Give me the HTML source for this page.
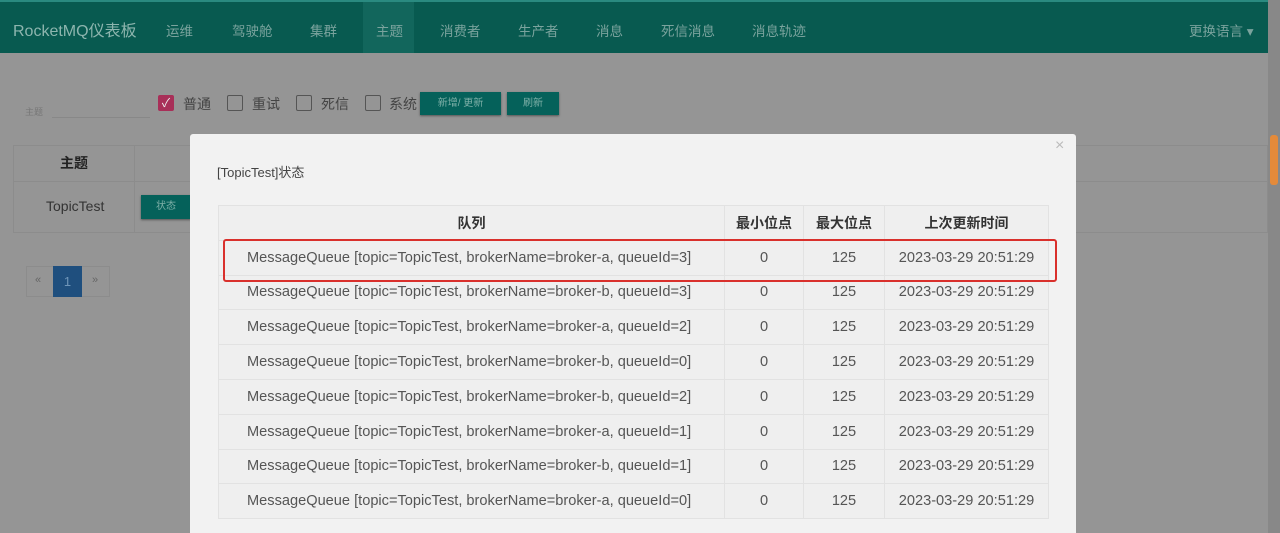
<!DOCTYPE html>
<html><head><meta charset="utf-8"><style>
*{margin:0;padding:0;box-sizing:border-box}
html,body{width:1280px;height:533px;overflow:hidden}
body{background:#959595;font-family:"Liberation Sans","Noto Sans CJK SC",sans-serif;position:relative;color:#333}
.abs{position:absolute}
.nav{left:0;top:0;width:1268px;height:53px;background:#085a50;border-top:2px solid #2a8a80}
.nav span{position:absolute;top:18px;font-size:13.5px;color:#7aa39d}
.scroll{left:1268px;top:0;width:12px;height:533px;background:#888}
.thumb{left:1270px;top:135px;width:8px;height:50px;background:#e48a3a;border-radius:3px}
.cb{width:16px;height:16px;border:1px solid #555;border-radius:2px}
.lbl{font-size:14px;color:#444}
.btn{background:#05615a;color:#7fb0a8;font-size:10px;text-align:center;line-height:23px;box-shadow:0 1px 2px #555}
.modal{left:190px;top:134px;width:886px;height:399px;background:#f2f2f2;border-radius:3px 3px 0 0}
table{position:absolute;left:218px;top:205px;border-collapse:collapse;background:#efefef;font-size:14.6px;color:#555}
td,th{border:1px solid #e2e2e2;height:34.8px;text-align:center}
th{font-weight:bold;color:#333;font-size:14px}
td.q{text-align:left;padding-left:28px}
</style></head><body>
<div class="abs nav">
<span style="left:13px;top:15px;font-size:16px;color:#8db5ae">RocketMQ仪表板</span>
<span style="left:166px">运维</span><span style="left:232px">驾驶舱</span><span style="left:310px">集群</span>
<div class="abs" style="left:363px;top:0;width:51px;height:51px;background:#12665c"></div>
<span style="left:376px">主题</span><span style="left:440px">消费者</span><span style="left:518px">生产者</span><span style="left:596px">消息</span><span style="left:661px">死信消息</span><span style="left:752px">消息轨迹</span>
<span style="left:1189px">更换语言 ▾</span>
</div>
<div class="abs" style="left:25px;top:105px;font-size:9px;color:#777">主题</div>
<div class="abs" style="left:52px;top:117px;width:98px;height:1px;background:#888"></div>
<div class="abs cb" style="left:158px;top:95px;background:#a82f58;border-color:#a82f58;color:#eee;font-size:12px;line-height:14px;text-align:center">✓</div>
<div class="abs lbl" style="left:183px;top:94px">普通</div>
<div class="abs cb" style="left:227px;top:95px"></div><div class="abs lbl" style="left:252px;top:94px">重试</div>
<div class="abs cb" style="left:296px;top:95px"></div><div class="abs lbl" style="left:321px;top:94px">死信</div>
<div class="abs cb" style="left:365px;top:95px"></div><div class="abs lbl" style="left:389px;top:94px">系统</div>
<div class="abs btn" style="left:420px;top:92px;width:81px">新增/ 更新</div>
<div class="abs btn" style="left:507px;top:92px;width:52px">刷新</div>
<div class="abs" style="left:13px;top:145px;width:1255px;height:88px;border:1px solid #8c8c8c"></div>
<div class="abs" style="left:134px;top:145px;width:1px;height:88px;background:#8c8c8c"></div>
<div class="abs" style="left:13px;top:181px;width:1255px;height:1px;background:#8c8c8c"></div>
<div class="abs" style="left:60px;top:153px;font-size:14px;font-weight:bold;color:#222">主题</div>
<div class="abs" style="left:46px;top:198px;font-size:14px;color:#333">TopicTest</div>
<div class="abs btn" style="left:141px;top:195px;width:50px;height:24px">状态</div>
<div class="abs" style="left:26px;top:266px;width:84px;height:31px;border:1px solid #8c8c8c"></div>
<div class="abs" style="left:53px;top:266px;width:29px;height:31px;background:#1f4f7e;color:#6f95b8;font-size:13px;text-align:center;line-height:31px">1</div>
<div class="abs" style="left:35px;top:274px;font-size:11px;color:#666">«</div>
<div class="abs" style="left:92px;top:274px;font-size:11px;color:#666">»</div>
<div class="abs scroll"></div><div class="abs thumb"></div>
<div class="abs modal"></div>
<div class="abs" style="left:1055px;top:137px;font-size:16px;color:#bbb">×</div>
<div class="abs" style="left:217px;top:162px;font-size:13px;color:#444">[TopicTest]状态</div>
<table>
<tr><th style="width:506px">队列</th><th style="width:79px">最小位点</th><th style="width:81px">最大位点</th><th style="width:164px">上次更新时间</th></tr>
<tr><td class="q">MessageQueue [topic=TopicTest, brokerName=broker-a, queueId=3]</td><td>0</td><td>125</td><td>2023-03-29 20:51:29</td></tr>
<tr><td class="q">MessageQueue [topic=TopicTest, brokerName=broker-b, queueId=3]</td><td>0</td><td>125</td><td>2023-03-29 20:51:29</td></tr>
<tr><td class="q">MessageQueue [topic=TopicTest, brokerName=broker-a, queueId=2]</td><td>0</td><td>125</td><td>2023-03-29 20:51:29</td></tr>
<tr><td class="q">MessageQueue [topic=TopicTest, brokerName=broker-b, queueId=0]</td><td>0</td><td>125</td><td>2023-03-29 20:51:29</td></tr>
<tr><td class="q">MessageQueue [topic=TopicTest, brokerName=broker-b, queueId=2]</td><td>0</td><td>125</td><td>2023-03-29 20:51:29</td></tr>
<tr><td class="q">MessageQueue [topic=TopicTest, brokerName=broker-a, queueId=1]</td><td>0</td><td>125</td><td>2023-03-29 20:51:29</td></tr>
<tr><td class="q">MessageQueue [topic=TopicTest, brokerName=broker-b, queueId=1]</td><td>0</td><td>125</td><td>2023-03-29 20:51:29</td></tr>
<tr><td class="q">MessageQueue [topic=TopicTest, brokerName=broker-a, queueId=0]</td><td>0</td><td>125</td><td>2023-03-29 20:51:29</td></tr>
</table>
<div class="abs" style="left:223px;top:239px;width:834px;height:43px;border:2px solid #d9302c;border-radius:3px"></div>
</body></html>
